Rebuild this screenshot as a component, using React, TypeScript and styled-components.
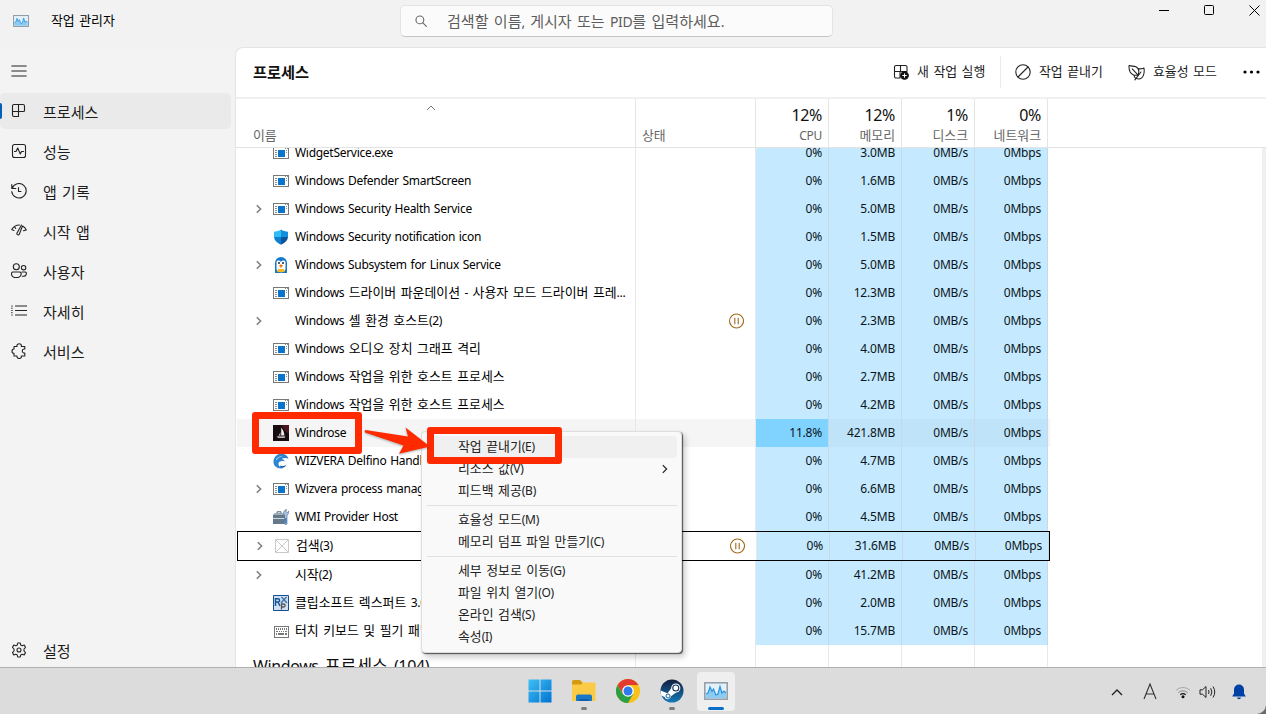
import React from "react";
import styled, { createGlobalStyle, css } from "styled-components";

const GlobalStyle = createGlobalStyle`
  * { box-sizing: border-box; }
  html, body { margin: 0; padding: 0; }
  body {
    width: 1266px;
    height: 714px;
    overflow: hidden;
    font-family: "Noto Sans", "Noto Sans CJK KR", sans-serif;
    color: #1a1a1a;
  }
  svg { display: block; flex: none; }
`;

/* ---------- text ---------- */

const Phrase = styled.span<{ $korean: boolean }>`
  word-spacing: ${(p) => (p.$korean ? "0.14em" : "0.08em")};
  letter-spacing: -0.024em;
`;

const Hangul = styled.span`
  font-family: "Noto Sans CJK KR", sans-serif;
  font-size: 1.075em;
  line-height: 1;
  letter-spacing: 0;
`;

const KText = ({ children }: { children: string }) => {
  const parts = children.split(/([\uAC00-\uD7A3]+)/);
  return (
    <Phrase $korean={parts.length > 1}>
      {parts.map((part, i) => (i % 2 === 1 ? <Hangul key={i}>{part}</Hangul> : part))}
    </Phrase>
  );
};

/* ---------- window frame ---------- */

const Screen = styled.div`
  position: relative;
  width: 1266px;
  height: 714px;
  display: flex;
  flex-direction: column;
  background: #f3f3f3;
  overflow: hidden;
`;

const TitleBar = styled.header`
  height: 47px;
  flex: none;
  display: flex;
  justify-content: space-between;
  background: #f2f2f2;
`;

const AppTitle = styled.div`
  width: 400px;
  height: 41px;
  display: flex;
  align-items: center;
  gap: 22px;
  padding: 1px 0 0 13px;
  font-size: 12px;
  line-height: 18px;
  color: #000;
`;

const SearchBox = styled.div`
  width: 433px;
  height: 32px;
  margin-top: 5px;
  display: flex;
  align-items: center;
  gap: 20px;
  padding-left: 14px;
  background: #fbfbfb;
  border: 1px solid #e4e4e4;
  border-bottom-color: #c4c4c4;
  border-radius: 5px;
  font-size: 14px;
  line-height: 20px;
  color: #5d5d5d;
`;

const SearchHint = styled.span`
  padding-top: 2px;
`;

const WindowButtons = styled.div`
  width: 433px;
  height: 20px;
  display: flex;
  justify-content: flex-end;
  align-items: center;
  gap: 35px;
  padding-right: 6px;
`;

const Main = styled.div`
  flex: 1;
  min-height: 0;
  display: flex;
`;

/* ---------- sidebar ---------- */

const Sidebar = styled.nav`
  width: 235px;
  flex: none;
  display: flex;
  flex-direction: column;
  padding-top: 46px;
  margin-top: -46px;
`;

const MenuButton = styled.div`
  height: 46px;
  display: flex;
  align-items: center;
  padding: 2px 0 0 11px;
`;

const NavItem = styled.div<{ $active?: boolean }>`
  height: 36px;
  flex: none;
  margin: 0 4px 4px 0;
  display: flex;
  align-items: center;
  padding-left: ${(p) => (p.$active ? 0 : 11)}px;
  font-size: 14px;
  line-height: 20px;
  color: #1c1c1c;
  ${(p) =>
    p.$active &&
    css`
      background: #eaeaea;
      border-radius: 5px;
    `}
`;

const ActiveMark = styled.span`
  width: 2px;
  height: 16px;
  margin-right: 9px;
  background: #005fb8;
  border-radius: 0 2px 2px 0;
`;

const NavLabel = styled.span`
  padding: 3px 0 0 16px;
`;

const NavSpacer = styled.div`
  flex: 1;
`;

const NavFooter = styled.div`
  margin-bottom: -5px;
`;

/* ---------- process panel ---------- */

const Panel = styled.section`
  flex: 1;
  display: flex;
  flex-direction: column;
  background: #fff;
  border: 1px solid #e4e4e4;
  border-width: 1px 0 0 1px;
  border-top-left-radius: 8px;
  overflow: hidden;
`;

const CommandBar = styled.div`
  height: 51px;
  flex: none;
  display: flex;
  align-items: center;
  padding: 0 6px 1px 17px;
  border-bottom: 2px solid #f0f0f0;
`;

const PanelTitle = styled.h1`
  flex: 1;
  margin: 2px 0 0;
  font-size: 14.2px;
  font-weight: 600;
  line-height: 20px;
  color: #111;
`;

const Command = styled.div<{ $w: number }>`
  width: ${(p) => p.$w}px;
  display: flex;
  align-items: center;
  gap: 8px;
  font-size: 12px;
  line-height: 20px;
  white-space: nowrap;
  color: #1a1a1a;
`;

const CommandDivider = styled.span`
  width: 1px;
  height: 32px;
  margin-right: 14px;
  background: #ebebeb;
`;

const HeaderRow = styled.div`
  height: 49px;
  flex: none;
  display: grid;
  grid-template-columns: 399px 120px repeat(4, 73px) 1fr;
  padding-left: 1px;
  border-bottom: 1px solid #e3e3e3;
`;

const HeadCell = styled.div<{ $num?: boolean }>`
  display: flex;
  flex-direction: column;
  justify-content: flex-end;
  align-items: ${(p) => (p.$num ? "flex-end" : "stretch")};
  padding: ${(p) => (p.$num ? "0 6px 2px 0" : "0 0 2px 6px")};
  border-right: 1px solid #e5e5e5;
`;

const SortMark = styled.div`
  display: flex;
  justify-content: center;
  padding: 0 17px 16px 0;
`;

const HeadName = styled.span<{ $indent?: boolean }>`
  padding-left: ${(p) => (p.$indent ? 10 : 0)}px;
  font-size: 12px;
  line-height: 18px;
  white-space: nowrap;
  color: #666;
`;

const HeadTotal = styled.span`
  font-size: 16px;
  line-height: 22px;
  padding-bottom: 1px;
  letter-spacing: -0.4px;
  color: #111;
`;

const ListArea = styled.div`
  flex: 1;
  min-height: 0;
  display: flex;
  overflow: hidden;
`;

const ListBody = styled.div`
  flex: 1;
  margin-top: -9px;
  padding-left: 1px;
`;

const ScrollGutter = styled.div`
  width: 4px;
  background: #f0f0f0;
`;

type RowState = "plain" | "hover" | "focus";

const Row = styled.div<{ $state: RowState }>`
  width: 813px;
  height: ${(p) => (p.$state === "focus" ? 30 : 28)}px;
  display: grid;
  grid-template-columns: 399px 120px repeat(4, 73px);
  background: ${(p) => (p.$state === "hover" ? "#f5f5f5" : "#fff")};
  border: ${(p) => (p.$state === "focus" ? "1px solid #000" : "none")};
`;

const NameCell = styled.div`
  display: flex;
  align-items: center;
  min-width: 0;
  padding-right: 4px;
  border-right: 1px solid #e8e8e8;
  color: #000;
`;

const Expander = styled.span`
  width: 36px;
  flex: none;
  display: flex;
  justify-content: center;
  padding-left: 7px;
`;

const IconSlot = styled.span`
  width: 16px;
  height: 16px;
  margin-right: 6px;
  flex: none;
`;

const ProcName = styled.span`
  flex: 1;
  overflow: hidden;
  white-space: nowrap;
  font-size: 12px;
  line-height: 20px;
`;

const StatusCell = styled.div`
  display: flex;
  align-items: center;
  justify-content: flex-end;
  padding-right: 11px;
  border-right: 1px solid #e8e8e8;
`;

const NumCell = styled.div<{ $bg: string }>`
  display: flex;
  align-items: center;
  justify-content: flex-end;
  padding-right: 6px;
  border-right: 1px solid #c5d9e6;
  background: ${(p) => p.$bg};
  font-size: 12px;
  line-height: 20px;
  letter-spacing: -0.2px;
  color: #0a1520;
`;

const TailRow = styled.div`
  height: 40px;
  display: grid;
  grid-template-columns: 399px 120px repeat(4, 73px);
`;

const TailCell = styled.div`
  padding: 10px 0 0 16px;
  border-right: 1px solid #e8e8e8;
  font-size: 16px;
  line-height: 22px;
  white-space: nowrap;
  color: #111;
`;

/* ---------- context menu ---------- */

const ContextMenu = styled.div`
  position: absolute;
  left: 421px;
  top: 431px;
  width: 261px;
  height: 222px;
  padding: 4px 4px 4px 5px;
  background: #f9f9f9;
  border: 1px solid #dedede;
  border-radius: 4px;
  box-shadow: 1px 1px 1px rgba(0, 0, 0, 0.62), 3px 4px 6px rgba(0, 0, 0, 0.22);
`;

const MenuItem = styled.div<{ $hot?: boolean }>`
  height: 22px;
  display: flex;
  align-items: center;
  justify-content: space-between;
  padding: 0 8px 0 31px;
  border-radius: 4px;
  background: ${(p) => (p.$hot ? "#f0f0f0" : "transparent")};
  font-size: 12px;
  line-height: 20px;
  color: #222;
`;

const MenuLine = styled.div`
  height: 1px;
  margin: 3px 0;
  background: #e0e0e0;
`;

/* ---------- highlights ---------- */

const RedFrame = styled.div<{ $x: number; $y: number; $w: number; $h: number }>`
  position: absolute;
  left: ${(p) => p.$x}px;
  top: ${(p) => p.$y}px;
  width: ${(p) => p.$w}px;
  height: ${(p) => p.$h}px;
  border: 7px solid #ff2a00;
  border-radius: 3px;
`;

const ArrowLayer = styled.svg`
  position: absolute;
  left: 362px;
  top: 424px;
  filter: drop-shadow(0 1px 1px rgba(0, 0, 0, 0.3));
`;

/* ---------- taskbar ---------- */

const Taskbar = styled.footer`
  position: relative;
  height: 47px;
  flex: none;
  display: grid;
  grid-template-columns: 521px 1fr 515px;
  background: #dcdcdc;
  border-top: 1px solid #b0b0b0;
`;

const TaskApps = styled.div`
  grid-column: 2;
  display: flex;
  padding-top: 4px;
  gap: 6px;
`;

const TaskApp = styled.div<{ $active?: boolean }>`
  width: 38px;
  height: 39px;
  flex: none;
  display: flex;
  flex-direction: column;
  align-items: center;
  padding-top: 7px;
  border-radius: 4px;
  background: ${(p) => (p.$active ? "#efefef" : "transparent")};
`;

const RunMark = styled.span<{ $active?: boolean }>`
  width: ${(p) => (p.$active ? 16 : 6)}px;
  height: 3px;
  margin-top: 4px;
  border-radius: 2px;
  background: ${(p) => (p.$active ? "#0a6fc9" : "#7c7c7c")};
`;

const Tray = styled.div`
  display: flex;
  justify-content: flex-end;
  align-items: center;
  padding: 1px 20px 0 0;
`;

const TrayIcon = styled.span<{ $gap: number }>`
  margin-right: ${(p) => p.$gap}px;
`;

const ScreenCorner = styled.svg`
  position: absolute;
  right: 0;
  bottom: 0;
`;

/* ---------- icons ---------- */

const Line = ({
  d,
  size = 16,
  w = 1.1,
  color = "#222",
  children,
}: {
  d?: string;
  size?: number;
  w?: number;
  color?: string;
  children?: React.ReactNode;
}) => (
  <svg width={size} height={size} viewBox="0 0 16 16" fill="none" stroke={color} strokeWidth={w} strokeLinejoin="round" strokeLinecap="round">
    {d && <path d={d} />}
    {children}
  </svg>
);

const GraphIcon = ({ w, h }: { w: number; h: number }) => (
  <svg width={w} height={h} viewBox="0 0 24 18" preserveAspectRatio="none">
    <rect x="0.8" y="0.8" width="22.4" height="16.4" fill="#e4f1f9" stroke="#8f9ba6" strokeWidth="1.5" />
    <path d="M2 16V12L4 11 6 5 8 9.500 9.500 7 12 13 14 12 16 4.500 18 11 20 9 22 11V16Z" fill="#8cccf2" />
    <path d="M2 12L4 11 6 5 8 9.500 9.500 7 12 13 14 12 16 4.500 18 11 20 9 22 11" fill="none" stroke="#2a93dc" strokeWidth="1.2" />
  </svg>
);

const ExeIcon = () => (
  <svg width="16" height="16" viewBox="0 0 16 16" shapeRendering="crispEdges">
    <path d="M0 2h16v12H0z" fill="#787878" />
    <path d="M1 3h14v10H1z" fill="#fff" />
    <path d="M5 5h7v7H5z" fill="#0a73cc" />
    <path d="M2 5h2v1H2zM2 7h2v1H2zM2 9h2v1H2zM2 11h2v1H2zM12 3h1v1h-1zM14 3h1v1h-1zM13 5h1v1h-1zM13 7h1v1h-1z" fill="#8c8c8c" />
  </svg>
);

const ShieldIcon = () => (
  <svg width="16" height="16" viewBox="0 0 16 16">
    <path d="M8 .5C6 2 3.500 2.600 1 2.700V8H8Z" fill="#2fbdf3" />
    <path d="M8 .5c2 1.500 4.500 2.100 7 2.200V8H8Z" fill="#1290df" />
    <path d="M1 8c.3 3.500 3 6 7 7.700V8Z" fill="#0f7fd2" />
    <path d="M15 8c-.3 3.500-3 6-7 7.700V8Z" fill="#0b559f" />
  </svg>
);

const PenguinIcon = () => (
  <svg width="16" height="16" viewBox="0 0 16 16">
    <path d="M2 16V6a6 6 0 0 1 12 0v10Z" fill="#1177cf" />
    <path d="M3.500 5.500C3.500 3 6.500 3 8 5c1.500-2 4.500-2 4.500.5V12c0 4-9 4-9 0Z" fill="#fff" />
    <path d="M4 14.500 5 12h6l1 2.500-4 1Z" fill="#f9b81f" />
    <path d="M6 8.500 8 7.200l2 1.300L8 11Z" fill="#f27b13" />
    <circle cx="6" cy="6" r="1" fill="#1b2b44" />
    <circle cx="10" cy="6" r="1" fill="#1b2b44" />
  </svg>
);

const SailIcon = () => (
  <svg width="16" height="16" viewBox="0 0 16 16">
    <path d="M0 0h16v16H0z" fill="#170d10" />
    <path d="M9 0h7v9l-4-3Z" fill="#4a1420" />
    <path d="M8.200 2.500c2 2.500 3 5 3.200 8H8.200ZM7.300 7v3.500H5.500C6.500 9.500 7 8.500 7.300 7ZM3.500 11.500h9l-1 1.200H5Z" fill="#f2eeee" />
  </svg>
);

const DolphinIcon = () => (
  <svg width="16" height="16" viewBox="0 0 16 16">
    <path d="M.5 9C.5 4 4.500.5 9 .8c3.500.2 5.500 2.200 6.500 5-2.300-1-5-1.200-7 .2 2 .3 3 1.300 3.500 2.500-3-1-6-.5-6.500 2C5.200 12.800 7.500 14.500 11 15 5 16.500.5 13.500.5 9Z" fill="#2c86cf" />
    <path d="M3 6.500C4.500 4 7 2.700 10 3c-3 .7-5 2-6.500 4.500Z" fill="#a6d8f6" />
    <path d="M7 12.500c2 1 4.500.8 6.500-1-1 2.700-3.500 3.700-6 3Z" fill="#1c5ea8" />
  </svg>
);

const ToolboxIcon = () => (
  <svg width="16" height="16" viewBox="0 0 16 16">
    <path d="M0 6h12v9H0z" fill="#66798a" />
    <path d="M0 6 1.500 4h9L12 6Z" fill="#9aabb9" />
    <path d="M4 4V2.800h4V4" fill="none" stroke="#55636f" />
    <path d="M0 9h12v1H0z" fill="#cfd8df" />
    <path d="M10.500 4.500c0-2 1-3.500 3-4l-.6 2 1.500 1L16 2c.2 2-.6 3.300-2 4v8.500c0 1.500-2.500 1.500-2.500 0V6Z" fill="#a9c4dc" stroke="#4d6a86" strokeWidth=".6" />
    <path d="M11.700 9h2v5.500h-2z" fill="#4583c2" />
  </svg>
);

const MissingIcon = () => (
  <svg width="16" height="16" viewBox="0 0 16 16" fill="none" stroke="#c9c9c9" strokeWidth="1">
    <path d="M1.500 1.500h13v13h-13ZM2 2l12 12M14 2 2 14" />
  </svg>
);

const RexIcon = () => (
  <svg width="16" height="16" viewBox="0 0 16 16">
    <path d="M.5.5h15v15H.5z" fill="#cfe0f0" stroke="#164f92" />
    <path d="M2.500 11V3.800h2.300c2.400 0 2.400 3.200 0 3.200H2.500M5 7l2 4" fill="none" stroke="#12539e" strokeWidth="1.500" />
    <path d="m8.500 2 5.500 6M13.500 2 8 8" stroke="#3b6ea5" strokeWidth="1.300" />
    <path d="M8.500 14.500V9h2c2.200 0 2.200 3 0 3h-2" fill="none" stroke="#555" strokeWidth="1.300" />
  </svg>
);

const KeyboardIcon = () => (
  <svg width="16" height="16" viewBox="0 0 16 16" shapeRendering="crispEdges">
    <path d="M1 3h14v11H1z" fill="#fff" stroke="#777" />
    <path d="M3 5h1v2H3zM5 5h1v2H5zM7 5h1v2H7zM9 5h1v2H9zM11 5h1v2h-1zM13 5h1v2h-1zM3 8h2v1H3zM6 8h1v1H6zM8 8h1v1H8zM10 8h1v1h-1zM12 8h2v1h-2zM3 10h1v2H3zM5 10h6v2H5zM12 10h2v2h-2z" fill="#777" />
  </svg>
);

const Chevron = ({ color = "#808080", w = 1.6 }: { color?: string; w?: number }) => (
  <svg width="8" height="10" viewBox="0 0 8 10" fill="none" stroke={color} strokeWidth={w}>
    <path d="m1.800 1.200 3.800 3.800-3.800 3.800" />
  </svg>
);

const PauseIcon = () => (
  <svg width="16" height="16" viewBox="0 0 16 16" fill="none" stroke="#a3691c" strokeWidth="1.1">
    <circle cx="8.500" cy="8" r="7" />
    <path d="M6.800 4.700v6.600M10.200 4.700v6.600" />
  </svg>
);

const procIcons: Record<string, React.ReactNode> = {
  exe: <ExeIcon />,
  shield: <ShieldIcon />,
  penguin: <PenguinIcon />,
  sail: <SailIcon />,
  dolphin: <DolphinIcon />,
  toolbox: <ToolboxIcon />,
  missing: <MissingIcon />,
  rex: <RexIcon />,
  keyboard: <KeyboardIcon />,
};

/* ---------- data ---------- */

interface Proc {
  name: string;
  icon?: string;
  mem: string;
  cpu?: string;
  open?: boolean;
  paused?: boolean;
  state?: RowState;
}

const processes: Proc[] = [
  { name: "WidgetService.exe", icon: "exe", mem: "3.0MB" },
  { name: "Windows Defender SmartScreen", icon: "exe", mem: "1.6MB" },
  { name: "Windows Security Health Service", icon: "exe", mem: "5.0MB", open: true },
  { name: "Windows Security notification icon", icon: "shield", mem: "1.5MB" },
  { name: "Windows Subsystem for Linux Service", icon: "penguin", mem: "5.0MB", open: true },
  { name: "Windows 드라이버 파운데이션 - 사용자 모드 드라이버 프레...", icon: "exe", mem: "12.3MB" },
  { name: "Windows 셸 환경 호스트(2)", mem: "2.3MB", open: true, paused: true },
  { name: "Windows 오디오 장치 그래프 격리", icon: "exe", mem: "4.0MB" },
  { name: "Windows 작업을 위한 호스트 프로세스", icon: "exe", mem: "2.7MB" },
  { name: "Windows 작업을 위한 호스트 프로세스", icon: "exe", mem: "4.2MB" },
  { name: "Windrose", icon: "sail", mem: "421.8MB", cpu: "11.8%", state: "hover" },
  { name: "WIZVERA Delfino Handler", icon: "dolphin", mem: "4.7MB" },
  { name: "Wizvera process manager", icon: "exe", mem: "6.6MB", open: true },
  { name: "WMI Provider Host", icon: "toolbox", mem: "4.5MB" },
  { name: "검색(3)", icon: "missing", mem: "31.6MB", open: true, paused: true, state: "focus" },
  { name: "시작(2)", mem: "41.2MB", open: true },
  { name: "클립소프트 렉스퍼트 3.0", icon: "rex", mem: "2.0MB" },
  { name: "터치 키보드 및 필기 패널", icon: "keyboard", mem: "15.7MB" },
];

const totals = [
  ["12%", "CPU"],
  ["12%", "메모리"],
  ["1%", "디스크"],
  ["0%", "네트워크"],
];

const navItems: { label: string; icon: React.ReactNode }[] = [
  { label: "프로세스", icon: <Line d="M1.500 3a1.500 1.500 0 0 1 1.500-1.500h9A1.500 1.500 0 0 1 13.500 3v4.500a1 1 0 0 1-1 1H1.500ZM1.500 8.500V12A1.500 1.500 0 0 0 3 13.500h4.500v-12" /> },
  { label: "성능", icon: <Line d="M3.500 1.500h9a2 2 0 0 1 2 2v9a2 2 0 0 1-2 2h-9a2 2 0 0 1-2-2v-9a2 2 0 0 1 2-2ZM3.500 8.500H5L6.700 5l2.600 6 1.200-2.500h2" /> },
  { label: "앱 기록", icon: <Line d="M.8 1.500v4h4M1.200 5.300A7.200 7.200 0 1 1 .8 8.500M7.500 4.500v4H10" /> },
  { label: "시작 앱", icon: <Line d="M.7 6.500A9 9 0 0 1 8.500 2M.7 6.500 3 7.500M3.500 3.500 4.700 5.500M15.300 7A9 9 0 0 0 12 3.300M15.300 7 12.500 7.800M10.500 2 6 10c-.6 2 1.700 2.500 2.400 1L11.500 3" /> },
  { label: "사용자", icon: <Line><circle cx="5.300" cy="3.800" r="3" /><circle cx="12.600" cy="4.700" r="2.200" /><path d="M2 9h6.500c1.800 0 1.800 1.600 1.500 2.800-.5 1.800-2.300 2.700-4.700 2.700S1 13.500.6 11.800C.4 10.500.5 9 2 9ZM11 9h3c1.700 0 1.500 1.500 1.200 2.500-.5 1.500-2 2-3.900 1.700" /></Line> },
  { label: "자세히", icon: <Line d="M4.500 3h11M4.500 7.500h11M4.500 12h11M.8 3h.4M.8 7.500h.4M.8 12h.4M.8 5.200h.2M.8 9.700h.2" w={1.200} /> },
  { label: "서비스", icon: <Line d="M3 3.500h3C5.500 1.500 7 .8 8.200.8S10.800 1.700 10.300 3.500h3.500V6c-1.600-.3-2.500.7-2.500 2s1 2.200 2.500 2v3H10.300c.5 1.800-.9 2.500-2.100 2.500S5.700 14.800 6 13H3v-2.700C1.500 10.300 1 9.200 1 8.200S1.500 6 3 6Z" /> },
];

const menuGroups = [
  ["작업 끝내기(E)", "리소스 값(V)", "피드백 제공(B)"],
  ["효율성 모드(M)", "메모리 덤프 파일 만들기(C)"],
  ["세부 정보로 이동(G)", "파일 위치 열기(O)", "온라인 검색(S)", "속성(I)"],
];

const ProcessRow = ({ p }: { p: Proc }) => {
  const state = p.state ?? "plain";
  const tint = state === "hover" ? "#bfe4f9" : "#c5eaff";
  return (
    <Row $state={state}>
      <NameCell>
        <Expander>{p.open && <Chevron />}</Expander>
        <IconSlot>{p.icon && procIcons[p.icon]}</IconSlot>
        <ProcName><KText>{p.name}</KText></ProcName>
      </NameCell>
      <StatusCell>{p.paused && <PauseIcon />}</StatusCell>
      <NumCell $bg={state === "hover" ? "#80d2ff" : tint}>{p.cpu ?? "0%"}</NumCell>
      <NumCell $bg={tint}>{p.mem}</NumCell>
      <NumCell $bg={tint}>0MB/s</NumCell>
      <NumCell $bg={tint}>0Mbps</NumCell>
    </Row>
  );
};

export default function App() {
  return (
    <>
      <GlobalStyle />
      <Screen>
        <TitleBar>
          <AppTitle>
            <GraphIcon w={16} h={12} />
            <KText>작업 관리자</KText>
          </AppTitle>
          <SearchBox>
            <Line size={12} color="#6a6a6a" w={1.500}><circle cx="6.500" cy="6.500" r="5.200" /><path d="m10.500 10.500 4.700 4.700" /></Line>
            <SearchHint><KText>검색할 이름, 게시자 또는 PID를 입력하세요.</KText></SearchHint>
          </SearchBox>
          <WindowButtons>
            <svg width="10" height="10"><path d="M0 5.500h10" stroke="#000" /></svg>
            <svg width="10" height="10"><rect x=".5" y=".5" width="9" height="9" rx="1" fill="none" stroke="#000" /></svg>
            <svg width="11" height="11"><path d="m.5.5 10 10M10.500.5l-10 10" stroke="#000" /></svg>
          </WindowButtons>
        </TitleBar>

        <Main>
          <Sidebar>
            <MenuButton><Line d="M.8 3h14.400M.8 8h14.400M.8 13h14.400" w={1} /></MenuButton>
            {navItems.map((item, i) => (
              <NavItem key={item.label} $active={i === 0}>
                {i === 0 && <ActiveMark />}
                {item.icon}
                <NavLabel><KText>{item.label}</KText></NavLabel>
              </NavItem>
            ))}
            <NavSpacer />
            <NavFooter>
              <NavItem>
                <Line>
                  <circle cx="8" cy="8" r="2" />
                  <path d="M6.700 1h2.600l.4 2 1.500.8 2-.7 1.300 2.200L13 7v2l1.500 1.700-1.300 2.200-2-.7-1.500.8-.4 2H6.700l-.4-2-1.500-.8-2 .7-1.300-2.200L3 9V7L1.500 5.300l1.300-2.200 2 .7L6.300 3Z" />
                </Line>
                <NavLabel><KText>설정</KText></NavLabel>
              </NavItem>
            </NavFooter>
          </Sidebar>

          <Panel>
            <CommandBar>
              <PanelTitle><KText>프로세스</KText></PanelTitle>
              <Command $w={107}>
                <Line>
                  <path d="M7 14H3a1.500 1.500 0 0 1-1.500-1.500V3A1.500 1.500 0 0 1 3 1.500h9.500A1.500 1.500 0 0 1 14 3v3.500M1.500 7.500H7M7.500 1.500v6H14M7 7.500V14" />
                  <circle cx="11.500" cy="11.500" r="3.800" fill="#111" stroke="#111" />
                  <path d="M11.500 9.700v3.600M9.700 11.500h3.600" stroke="#fff" />
                </Line>
                <KText>새 작업 실행</KText>
              </Command>
              <CommandDivider />
              <Command $w={113}>
                <Line><circle cx="8" cy="8" r="7.200" /><path d="M3 13 13 3" /></Line>
                <KText>작업 끝내기</KText>
              </Command>
              <Command $w={115}>
                <Line size={17} w={1} d="M1 1.500c2.500 1 4 0 6.500 1 3 1.500 3 5 2 8-3 .5-6-.5-7.500-3C1 5.500.8 3.500 1 1.500ZM4 4.500l5.500 6M10 4.500c2 .3 3.500 0 5-.8.500 3 .3 5-.5 7-1.200 2.800-4 3.800-6.500 3-1.300-.4-2-1.200-2.300-2.500M12.200 7.500 6.500 15" />
                <KText>효율성 모드</KText>
              </Command>
              <svg width="17" height="4"><circle cx="2" cy="2" r="1.600" /><circle cx="8.500" cy="2" r="1.600" /><circle cx="15" cy="2" r="1.600" /></svg>
            </CommandBar>

            <HeaderRow>
              <HeadCell>
                <SortMark>
                  <svg width="10" height="6" fill="none" stroke="#777"><path d="m1 5 4-4 4 4" /></svg>
                </SortMark>
                <HeadName $indent><KText>이름</KText></HeadName>
              </HeadCell>
              <HeadCell><HeadName><KText>상태</KText></HeadName></HeadCell>
              {totals.map(([value, label]) => (
                <HeadCell key={label} $num>
                  <HeadTotal>{value}</HeadTotal>
                  <HeadName><KText>{label}</KText></HeadName>
                </HeadCell>
              ))}
            </HeaderRow>

            <ListArea>
              <ListBody>
                {processes.map((p, i) => <ProcessRow key={i} p={p} />)}
                <TailRow>
                  <TailCell><KText>Windows 프로세스 (104)</KText></TailCell>
                  <TailCell /><TailCell /><TailCell /><TailCell /><TailCell />
                </TailRow>
              </ListBody>
              <ScrollGutter />
            </ListArea>
          </Panel>
        </Main>

        <Taskbar>
          <TaskApps>
            <TaskApp>
              <svg width="24" height="24" viewBox="0 0 24 24">
                <defs><linearGradient id="win" x1="0" y1="0" x2="1" y2="1"><stop offset="0" stopColor="#3fc0f5" /><stop offset="1" stopColor="#0072d0" /></linearGradient></defs>
                <path d="M.5.500h11v11H.5ZM12.500.500h11v11h-11ZM.5 12.500h11v11H.5ZM12.500 12.500h11v11h-11Z" fill="url(#win)" />
              </svg>
            </TaskApp>
            <TaskApp>
              <svg width="26" height="24" viewBox="0 0 26 24">
                <path d="M1 2.500Q1 1 2.500 1H9l2.500 2.500V8H1Z" fill="#d49a12" />
                <path d="M1 5.500h9L12 3.500h12.500V22H1Z" fill="#fccb45" />
                <path d="M5 22v-4.500Q5 15.500 7 15.500h12q2 0 2 2V22Z" fill="#1878c8" />
                <path d="M8 20h10v2H8Z" fill="#0e5da6" />
              </svg>
              <RunMark />
            </TaskApp>
            <TaskApp>
              <svg width="24" height="24" viewBox="0 0 24 24">
                <circle cx="12" cy="12" r="12" fill="#fbc116" />
                <path d="M1.600 6A12 12 0 0 1 22.400 6H12L7 15Z" fill="#e33b2e" />
                <path d="M1.600 6A12 12 0 0 0 12 24L17.200 15 6.800 15Z" fill="#2b9f47" />
                <circle cx="12" cy="12" r="5.800" fill="#fff" />
                <circle cx="12" cy="12" r="4.500" fill="#2d7bea" />
              </svg>
            </TaskApp>
            <TaskApp>
              <svg width="24" height="24" viewBox="0 0 24 24">
                <defs><linearGradient id="steam" x1="0" y1="0" x2="0" y2="1"><stop offset="0" stopColor="#111d3c" /><stop offset="1" stopColor="#157ab8" /></linearGradient></defs>
                <circle cx="12" cy="12" r="11.500" fill="url(#steam)" />
                <path d="M.6 11.500 7.500 14.300 11.500 9l5 4.200-5.500 4a3.300 3.300 0 0 1-6.400.8L1.200 16.500Z" fill="#fff" />
                <circle cx="15.800" cy="9" r="4.600" fill="#fff" />
                <circle cx="15.800" cy="9" r="3" fill="#fff" stroke="#17305a" strokeWidth="1.100" />
                <circle cx="8" cy="17" r="2" fill="none" stroke="#1b5f98" />
              </svg>
              <RunMark />
            </TaskApp>
            <TaskApp $active>
              <svg width="24" height="24" viewBox="0 0 24 24"><g transform="translate(0 3)"><GraphIcon w={24} h={18} /></g></svg>
              <RunMark $active />
            </TaskApp>
          </TaskApps>
          <Tray>
            <TrayIcon $gap={20}><svg width="12" height="8" fill="none" stroke="#222" strokeWidth="1.400"><path d="m1 7 5-5 5 5" /></svg></TrayIcon>
            <TrayIcon $gap={18}><svg width="14" height="17" fill="none" stroke="#333" strokeWidth="1.100"><path d="m1 16 6-15 6 15M3 11h8" /></svg></TrayIcon>
            <TrayIcon $gap={8}>
              <svg width="16" height="14" viewBox="0 0 16 14" fill="none">
                <path d="M.8 5.500a10 10 0 0 1 14.400 0" stroke="#aaa" />
                <path d="M3.300 7.800a6.600 6.600 0 0 1 9.400 0" stroke="#888" />
                <path d="M5.300 9.800a4 4 0 0 1 5.400 0" stroke="#111" strokeWidth="1.200" />
                <circle cx="8" cy="11.800" r="1.500" fill="#111" />
              </svg>
            </TrayIcon>
            <TrayIcon $gap={16}>
              <svg width="17" height="14" viewBox="0 0 17 14" fill="none" stroke="#222">
                <path d="M1 4.800h2.500L7 1.500v11L3.500 9.200H1ZM9.500 5q1.200 2 0 4M11.700 3.200q2.400 3.800 0 7.600M14 1.500q3.500 5.500 0 11" />
              </svg>
            </TrayIcon>
            <svg width="14" height="16" viewBox="0 0 14 16" fill="#0041a3"><path d="M7 .5a5 5 0 0 1 5 5v4l1.800 3H.2l1.800-3v-4a5 5 0 0 1 5-5ZM5 13.500h4q-.3 1.800-2 1.800t-2-1.800Z" /></svg>
          </Tray>
        </Taskbar>

        <ContextMenu>
          {menuGroups.map((group, g) => (
            <React.Fragment key={g}>
              {g > 0 && <MenuLine />}
              {group.map((label, i) => (
                <MenuItem key={label} $hot={g === 0 && i === 0}>
                  <KText>{label}</KText>
                  {g === 0 && i === 1 && <Chevron color="#222" w={1.200} />}
                </MenuItem>
              ))}
            </React.Fragment>
          ))}
        </ContextMenu>

        <RedFrame $x={252} $y={412} $w={110} $h={42} />
        <RedFrame $x={427} $y={427} $w={135} $h={37} />
        <ArrowLayer width="70" height="34" viewBox="0 0 70 34">
          <path d="M3.500 6 46 12.600 43.500 3.400 68 22.500 37 29.800 41.500 21.500 3 8.500Q2 6.500 3.500 6Z" fill="#ff2a00" />
        </ArrowLayer>
        <ScreenCorner width="9" height="9"><path d="M9 0v9H0Q8 8 9 0Z" fill="#6b6b6b" /></ScreenCorner>
      </Screen>
    </>
  );
}
